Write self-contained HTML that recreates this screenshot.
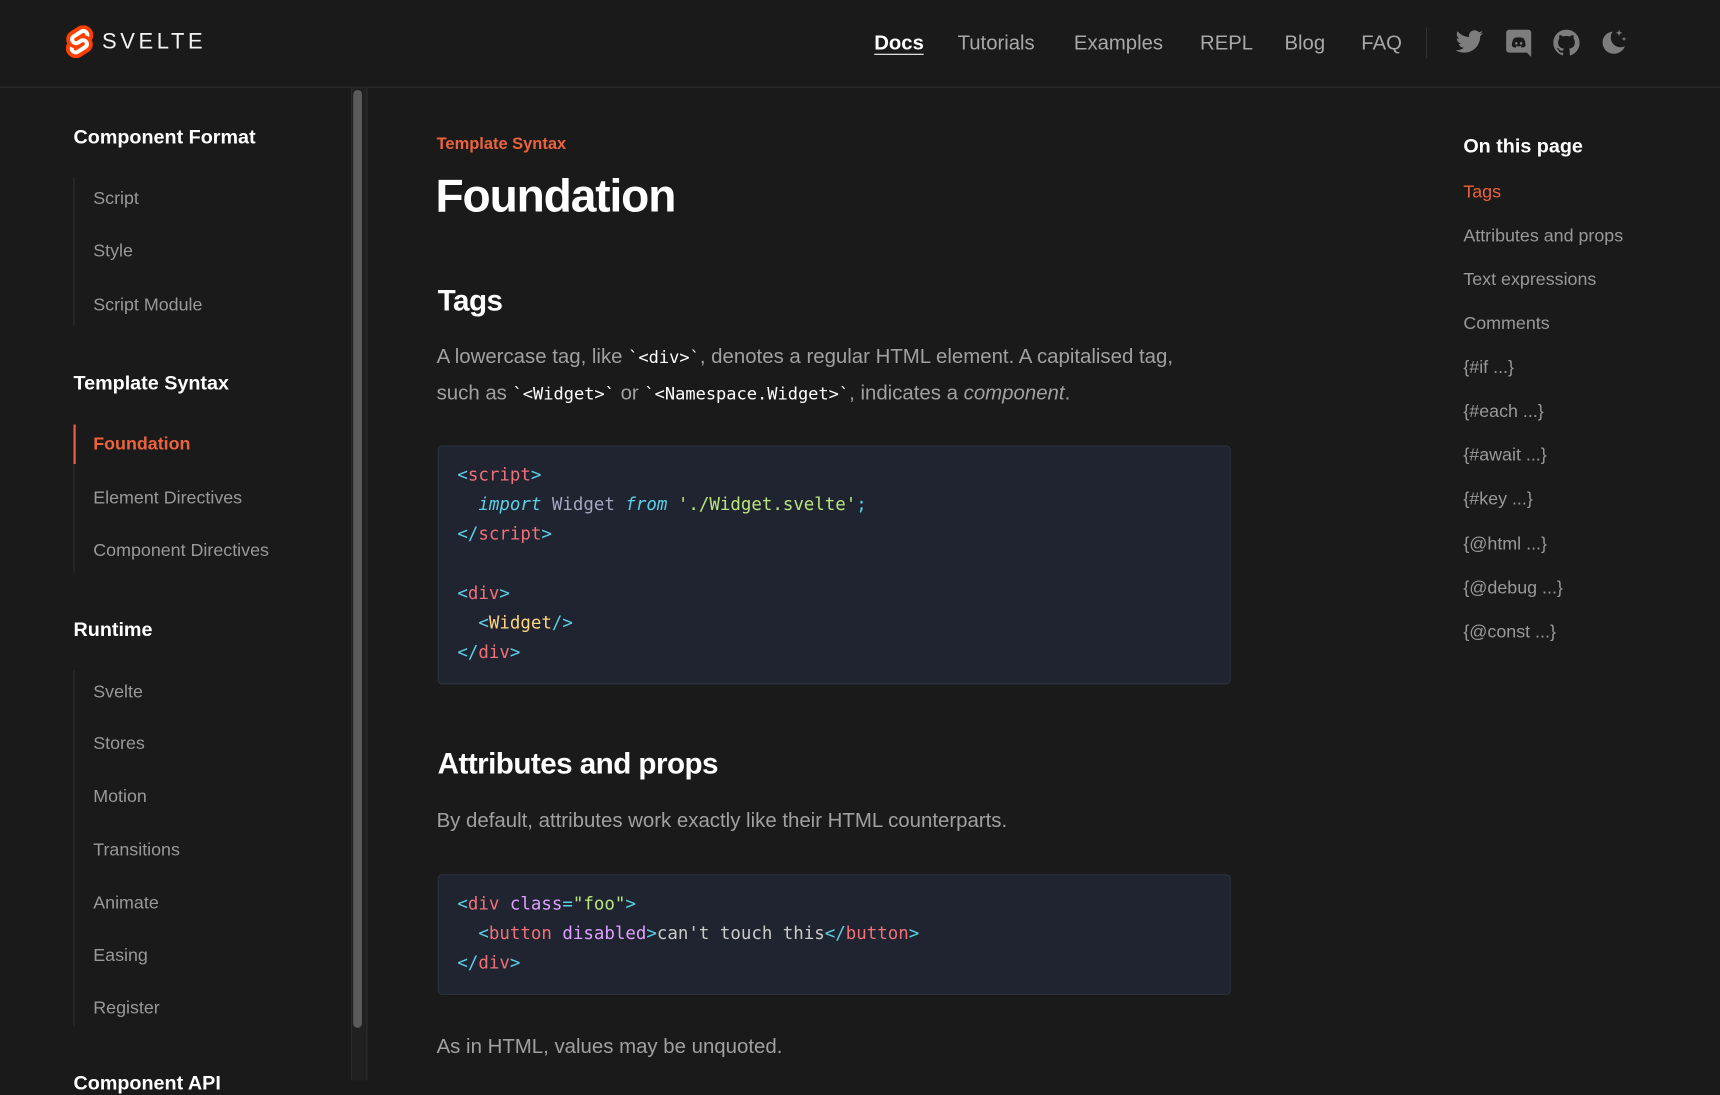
<!DOCTYPE html>
<html><head><meta charset="utf-8"><style>
html,body{margin:0;padding:0;background:#1a1a1a;overflow:hidden}
body{width:1720px;height:1080px}
#w{position:absolute;left:0;top:0;width:1568px;height:985px;transform:scale(1.09694);transform-origin:0 0;font-family:"Liberation Sans",sans-serif;color:#a6a6a6}
.a{position:absolute;white-space:nowrap}
header{position:absolute;left:0;top:0;width:1568px;height:79px;border-bottom:1px solid #2e2e2e;background:#1a1a1a}
.nav{font-size:18.5px;color:#a8a8a8;top:28px}
.sh{font-size:18px;font-weight:bold;color:#fff;left:67px}
.si{font-size:16.3px;color:#999;left:85px}
.bar{position:absolute;left:67px;width:1px;background:#2e2e2e}
.h2{font-size:27px;font-weight:bold;color:#fff;left:399px;letter-spacing:-0.5px}
.p{font-size:18.6px;color:#a0a0a0;left:398px}
.p code{font-family:"DejaVu Sans Mono",monospace;font-size:15.5px;color:#fff}
.code{position:absolute;left:399px;width:723px;background:#1f2430;border:1px solid #2a303c;border-radius:4px;font-family:"DejaVu Sans Mono",monospace;font-size:15.9px;line-height:27px;padding:12px 17px;box-sizing:border-box;white-space:pre;color:#cbccc6}
.c{color:#5ccfe6}.t{color:#f07178}.s{color:#bae67e}.y{color:#ffd580}.v{color:#a5a8bf}.pu{color:#dfa0ff}
.r{font-size:16.3px;color:#999;left:1334px}
</style></head><body><div id="w">
<header>
<svg class="a" style="left:60px;top:23px" width="25" height="30" viewBox="0 0 98 118"><path fill="#ff3e00" d="M91.8 15.6C80.9-.1 59.2-4.7 43.6 5.2L16.1 22.8C8.6 27.5 3.4 35.2 1.9 43.9c-1.3 7.3-.2 14.8 3.3 21.3-2.4 3.600-4 7.6-4.7 11.8-1.6 8.9.5 18.1 5.7 25.4 11 15.7 32.6 20.3 48.2 10.4l27.5-17.5c7.5-4.7 12.7-12.4 14.2-21.1 1.3-7.3.2-14.8-3.3-21.3 2.4-3.6 4-7.6 4.7-11.8 1.7-9-.4-18.2-5.7-25.500"/><path fill="#fff" d="M40.9 103.9c-8.9 2.3-18.2-1.2-23.4-8.7-3.200-4.4-4.4-9.9-3.5-15.3.2-.9.4-1.7.6-2.6l.5-1.6 1.4 1c3.3 2.4 6.9 4.2 10.8 5.4l1 .3-.1 1c-.1 1.4.3 2.9 1.1 4.1 1.6 2.3 4.4 3.4 7.1 2.7.6-.2 1.2-.4 1.7-.7L65.5 72c1.4-.9 2.3-2.2 2.6-3.8.3-1.6-.1-3.3-1-4.6-1.6-2.3-4.4-3.3-7.1-2.6-.6.2-1.2.4-1.7.7l-10.5 6.7c-1.7 1.1-3.6 1.9-5.6 2.4-8.9 2.3-18.2-1.2-23.4-8.7-3.1-4.4-4.4-9.9-3.4-15.3.9-5.2 4.1-9.9 8.6-12.7l27.5-17.5c1.7-1.1 3.6-1.9 5.6-2.5 8.9-2.3 18.2 1.2 23.4 8.7 3.2 4.4 4.4 9.9 3.5 15.3-.2.9-.4 1.7-.7 2.6l-.5 1.6-1.4-1c-3.3-2.4-6.9-4.2-10.8-5.4l-1-.3.1-1c.1-1.4-.3-2.9-1.1-4.1-1.6-2.3-4.4-3.3-7.1-2.6-.6.2-1.2.4-1.7.7L32.4 46.1c-1.4.9-2.3 2.2-2.6 3.8s.1 3.3 1 4.6c1.6 2.3 4.4 3.3 7.1 2.6.6-.2 1.2-.4 1.7-.7l10.5-6.7c1.7-1.1 3.6-1.9 5.6-2.5 8.9-2.3 18.2 1.2 23.4 8.7 3.2 4.4 4.4 9.9 3.5 15.3-.9 5.2-4.1 9.9-8.6 12.7l-27.5 17.5c-1.7 1.1-3.6 1.9-5.6 2.5"/></svg>
<div class="a" style="left:93px;top:27px;font-size:20px;letter-spacing:3.3px;color:#f4f4f4">SVELTE</div>
<div class="a nav" style="left:797px;color:#fff;font-weight:bold;border-bottom:1.5px solid #fff;line-height:21px">Docs</div>
<div class="a nav" style="left:873px">Tutorials</div>
<div class="a nav" style="left:979px">Examples</div>
<div class="a nav" style="left:1094px">REPL</div>
<div class="a nav" style="left:1171px">Blog</div>
<div class="a nav" style="left:1241px">FAQ</div>
<div class="a" style="left:1300px;top:25px;width:1px;height:28px;background:#333"></div>
<svg class="a" style="left:1327px;top:27px" width="25" height="22" viewBox="0 0 24 20"><path fill="#7d7d7d" d="M24 2.4c-.9.4-1.8.7-2.8.8 1-.6 1.8-1.6 2.2-2.7-1 .6-2 1-3.1 1.2C19.3.7 18 0 16.6 0c-2.7 0-4.900 2.2-4.9 4.9 0 .4 0 .8.1 1.1C7.7 5.8 4.1 3.9 1.7.9c-.4.7-.7 1.6-.7 2.5 0 1.7.9 3.2 2.2 4.1-.8 0-1.6-.2-2.2-.6v.1c0 2.4 1.7 4.4 3.9 4.8-.4.1-.8.2-1.3.2-.3 0-.6 0-.9-.1.6 2 2.4 3.4 4.6 3.4-1.7 1.3-3.8 2.1-6.1 2.1H0c2.2 1.4 4.8 2.2 7.5 2.2 9.1 0 14-7.500 14-14v-.6c1-.7 1.8-1.6 2.5-2.6z"/></svg>
<svg class="a" style="left:1373px;top:27px" width="23" height="25" viewBox="0 0 23 25"><path fill="#7d7d7d" fill-rule="evenodd" d="M3 0h17c1.6 0 3 1.3 3 3v22l-4-4H3c-1.7 0-3-1.3-3-3V3c0-1.700 1.4-3 3-3zm4 8c2-1 3.5-1 4.5-.8 1-.2 2.5-.2 4.5.8 1.5 2.5 1.8 5 1.7 7-1.2 1-2.5 1.3-3.5 1.4l-.8-1.2c.6-.2 1.2-.5 1.6-.9-2.5 1.3-4.5 1.3-7 0 .4.4 1 .7 1.6.9l-.8 1.2c-1-.1-2.3-.4-3.5-1.4-.1-2 .2-4.5 1.7-7zm2.3 3.3a1.1 1.2 0 1 0 0 2.4 1.1 1.2 0 1 0 0-2.4zm4.4 0a1.1 1.2 0 1 0 0 2.4 1.1 1.2 0 1 0 0-2.4z"/></svg>
<svg class="a" style="left:1416px;top:27px" width="24" height="24" viewBox="0 0 16 16"><path fill="#7d7d7d" d="M8 0C3.58 0 0 3.58 0 8c0 3.54 2.29 6.53 5.47 7.59.4.07.55-.17.55-.38v-1.33c-2.23.48-2.7-1.07-2.7-1.07-.36-.92-.89-1.17-.89-1.17-.73-.5.06-.49.06-.49.8.06 1.23.82 1.23.82.72 1.23 1.87.87 2.33.67.07-.52.28-.87.51-1.07-1.78-.2-3.64-.89-3.64-3.950 0-.87.31-1.59.82-2.15-.08-.2-.36-1.02.08-2.12 0 0 .67-.21 2.2.82.64-.18 1.32-.27 2-.27.68 0 1.36.09 2 .27 1.53-1.04 2.2-.82 2.2-.82.44 1.1.16 1.92.08 2.12.51.56.82 1.27.82 2.15 0 3.07-1.87 3.75-3.65 3.950.29.25.54.73.54 1.48v2.2c0 .21.15.46.55.38A8.013 8.013 0 0016 8c0-4.42-3.58-8-8-8z"/></svg>
<svg class="a" style="left:1459px;top:26px" width="25" height="25" viewBox="0 0 25 25"><path fill="#7d7d7d" d="M10 3C5 4 1.5 8.5 2 13.5 2.5 19 7 23 12.5 23c4.5 0 8.3-2.8 9.8-6.8-1.2.6-2.5.9-3.9.9-5 0-9-4-9-9 0-1.900.6-3.6 1.6-5.1H10z"/><path fill="#7d7d7d" d="M17 1l.8 2.2L20 4l-2.2.8L17 7l-.8-2.2L14 4l2.200-.8zM21.5 7.5l.6 1.4 1.4.6-1.4.6-.6 1.4-.6-1.4-1.4-.6 1.4-.6z"/></svg>
</header>
<div class="a" style="left:320px;top:80px;width:13px;height:905px;background:#202020;border-left:1px solid #2a2a2a;border-right:1px solid #2e2e2e"></div>
<div class="a" style="left:322px;top:82px;width:8px;height:855px;background:#5a5a5a;border-radius:4px"></div>
<div class="a sh" style="top:115px">Component Format</div>
<div class="bar" style="top:162px;height:135px"></div>
<div class="a si" style="top:172px">Script</div>
<div class="a si" style="top:220px">Style</div>
<div class="a si" style="top:269px">Script Module</div>
<div class="a sh" style="top:339px">Template Syntax</div>
<div class="bar" style="top:387px;height:135px"></div>
<div class="a" style="left:67px;top:387px;width:2px;height:36px;background:#e8613c"></div>
<div class="a si" style="top:396px;color:#ec633b;font-weight:bold">Foundation</div>
<div class="a si" style="top:445px">Element Directives</div>
<div class="a si" style="top:493px">Component Directives</div>
<div class="a sh" style="top:564px">Runtime</div>
<div class="bar" style="top:611px;height:325px"></div>
<div class="a si" style="top:622px">Svelte</div>
<div class="a si" style="top:669px">Stores</div>
<div class="a si" style="top:717px">Motion</div>
<div class="a si" style="top:766px">Transitions</div>
<div class="a si" style="top:814px">Animate</div>
<div class="a si" style="top:862px">Easing</div>
<div class="a si" style="top:910px">Register</div>
<div class="a sh" style="top:977px">Component API</div>

<div class="a" style="left:398px;top:123px;font-size:15px;font-weight:bold;color:#ec633b">Template Syntax</div>
<div class="a" style="left:397px;top:155px;font-size:42px;font-weight:bold;color:#fff;letter-spacing:-1px">Foundation</div>
<div class="a h2" style="top:259px">Tags</div>
<div class="a p" style="top:309px;line-height:32px">A lowercase tag, like <code>`&lt;div&gt;`</code>, denotes a regular HTML element. A capitalised tag,<br>such as <code>`&lt;Widget&gt;`</code> or <code>`&lt;Namespace.Widget&gt;`</code>, indicates a <i>component</i>.</div>
<div class="code" style="top:406px;height:218px"><span class="c">&lt;</span><span class="t">script</span><span class="c">&gt;</span>
  <i class="c">import</i> <span class="v">Widget</span> <i class="c">from</i> <span class="s">'./Widget.svelte'</span><span class="c">;</span>
<span class="c">&lt;/</span><span class="t">script</span><span class="c">&gt;</span>

<span class="c">&lt;</span><span class="t">div</span><span class="c">&gt;</span>
  <span class="c">&lt;</span><span class="y">Widget</span><span class="c">/&gt;</span>
<span class="c">&lt;/</span><span class="t">div</span><span class="c">&gt;</span></div>
<div class="a h2" style="top:681px">Attributes and props</div>
<div class="a p" style="top:737px">By default, attributes work exactly like their HTML counterparts.</div>
<div class="code" style="top:797px;height:110px"><span class="c">&lt;</span><span class="t">div</span> <span class="pu">class</span><span class="c">=</span><span class="s">"foo"</span><span class="c">&gt;</span>
  <span class="c">&lt;</span><span class="t">button</span> <span class="pu">disabled</span><span class="c">&gt;</span>can't touch this<span class="c">&lt;/</span><span class="t">button</span><span class="c">&gt;</span>
<span class="c">&lt;/</span><span class="t">div</span><span class="c">&gt;</span></div>
<div class="a p" style="top:943px">As in HTML, values may be unquoted.</div>

<div class="a" style="left:1334px;top:123px;font-size:18px;font-weight:bold;color:#fff">On this page</div>
<div class="a r" style="top:166px;color:#ec633b">Tags</div>
<div class="a r" style="top:206px">Attributes and props</div>
<div class="a r" style="top:246px">Text expressions</div>
<div class="a r" style="top:286px">Comments</div>
<div class="a r" style="top:326px">{#if ...}</div>
<div class="a r" style="top:366px">{#each ...}</div>
<div class="a r" style="top:406px">{#await ...}</div>
<div class="a r" style="top:446px">{#key ...}</div>
<div class="a r" style="top:487px">{@html ...}</div>
<div class="a r" style="top:527px">{@debug ...}</div>
<div class="a r" style="top:567px">{@const ...}</div>
</div></body></html>
